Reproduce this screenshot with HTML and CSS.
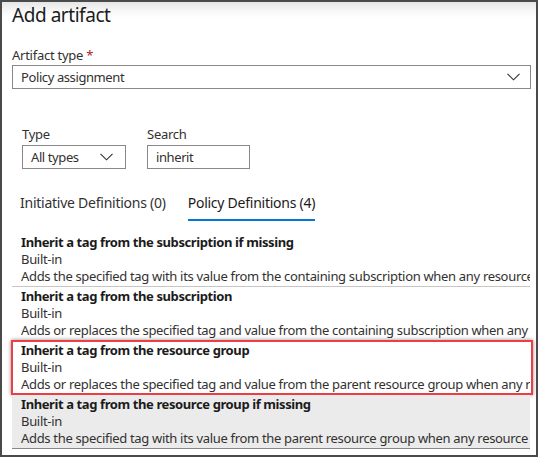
FILE: index.html
```html
<!DOCTYPE html>
<html>
<head>
<meta charset="utf-8">
<link rel="stylesheet" href="styles.css">
</head>
<body>
<div class="panel">
  <h1 class="title">Add artifact</h1>
  <div class="field">
    <div class="label">Artifact type <span class="req">*</span></div>
    <div class="select wide">
      <span>Policy assignment</span>
      <svg class="chev" width="13" height="8" viewBox="0 0 13 8"><path d="M0.5 0.8 L6.5 6.8 L12.5 0.8" fill="none" stroke="#323130" stroke-width="1.1"/></svg>
    </div>
  </div>
  <div class="filters">
    <div class="filter">
      <div class="label">Type</div>
      <div class="select small">
        <span>All types</span>
        <svg class="chev" width="13" height="8" viewBox="0 0 13 8"><path d="M0.5 0.8 L6.5 6.8 L12.5 0.8" fill="none" stroke="#323130" stroke-width="1.1"/></svg>
      </div>
    </div>
    <div class="filter">
      <div class="label">Search</div>
      <div class="input small"><span>inherit</span></div>
    </div>
  </div>
  <div class="tabs">
    <div class="tab">Initiative Definitions (0)</div>
    <div class="tab active">Policy Definitions (4)</div>
  </div>
  <div class="list">
    <div class="row">
      <div class="name">Inherit a tag from the subscription if missing</div>
      <div class="kind">Built-in</div>
      <div class="desc">Adds the specified tag with its value from the containing subscription when any resource missing this tag is created or updated.</div>
    </div>
    <div class="row">
      <div class="name">Inherit a tag from the subscription</div>
      <div class="kind">Built-in</div>
      <div class="desc">Adds or replaces the specified tag and value from the containing subscription when any resource is created or updated.</div>
    </div>
    <div class="row selected">
      <div class="name">Inherit a tag from the resource group</div>
      <div class="kind">Built-in</div>
      <div class="desc">Adds or replaces the specified tag and value from the parent resource group when any resource is created or updated.</div>
      <div class="highlight"></div>
    </div>
    <div class="row hover">
      <div class="name">Inherit a tag from the resource group if missing</div>
      <div class="kind">Built-in</div>
      <div class="desc">Adds the specified tag with its value from the parent resource group when any resource missing this tag is created or updated.</div>
    </div>
  </div>
</div>
</body>
</html>
```
FILE: styles.css
```css
html, body {
  margin: 0;
  padding: 0;
  background: #fff;
}
body {
  font-family: "Noto Sans", "Open Sans", sans-serif;
  color: #323130;
}
.panel {
  box-sizing: border-box;
  width: 538px;
  height: 457px;
  border: 2px solid #4a4a4a;
  background: linear-gradient(to bottom, #e6e6e6 0px, #f7f7f7 9px, #ffffff 16px);
  padding: 0 0 0 10px;
  overflow: hidden;
}
.title {
  margin: 0;
  font-size: 19px;
  font-weight: 400;
  line-height: 26px;
  color: #1b1b1b;
  letter-spacing: -0.45px;
}
.field {
  margin-top: 19px;
}
.label {
  font-size: 13px;
  line-height: 17px;
  letter-spacing: -0.25px;
}
.req {
  color: #a4262c;
}
.select, .input {
  box-sizing: border-box;
  height: 24px;
  border: 1px solid #8a8886;
  display: flex;
  align-items: center;
  justify-content: space-between;
  font-size: 13px;
  letter-spacing: -0.4px;
  padding: 0 0 0 8px;
  background: #fff;
}
.select.wide {
  width: 519px;
  margin-top: 1px;
  padding-right: 10px;
}
.select.small {
  width: 104px;
  padding-right: 12px;
}
.input.small {
  width: 103px;
}
.filters {
  display: flex;
  gap: 21px;
  margin-top: 37px;
  padding-left: 10px;
}
.filter .label {
  margin-bottom: 2px;
}
.tabs {
  display: flex;
  gap: 22px;
  margin-top: 25px;
  padding-left: 8px;
}
.tab {
  font-size: 14px;
  line-height: 18px;
  letter-spacing: -0.25px;
  padding-bottom: 7px;
  border-bottom: 2px solid transparent;
}
.tab.active {
  color: #1b1b1b;
  border-bottom-color: #0078d4;
}
.list {
  margin-top: 12px;
  width: 518px;
}
.row {
  position: relative;
  box-sizing: border-box;
  height: 54px;
  padding: 1px 0 0 9px;
  border-bottom: 1px solid #c8c6c4;
  font-size: 13px;
  line-height: 17px;
  letter-spacing: -0.32px;
  white-space: nowrap;
}
.row .name, .row .kind, .row .desc {
  overflow: hidden;
}
.name {
  font-weight: 700;
  color: #1b1b1b;
  letter-spacing: -0.4px;
}
.row.selected {
  border-bottom-color: transparent;
}
.row.hover {
  background: #ebebeb;
  border-bottom-color: #8a8886;
}
.highlight {
  position: absolute;
  left: -1px;
  top: -1px;
  right: -3px;
  bottom: -1px;
  border: 2px solid #ee3d45;
  box-shadow: 0 0 4px rgba(0, 0, 0, 0.45);
  pointer-events: none;
}
```
